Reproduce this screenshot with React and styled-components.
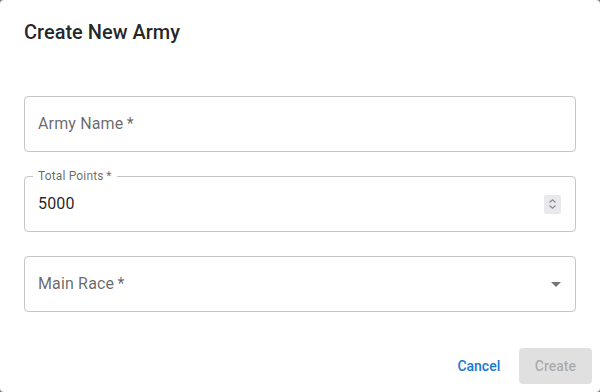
import React from "react";
import styled, { createGlobalStyle } from "styled-components";

const Global = createGlobalStyle`
  html, body { margin: 0; padding: 0; }
  body {
    background: #7a7a7a;
    font-family: Roboto, "Liberation Sans", sans-serif;
    -webkit-font-smoothing: antialiased;
  }
`;

const Dialog = styled.div`
  width: 600px;
  height: 392px;
  box-sizing: border-box;
  background: #fff;
  border-radius: 4px;
  display: flex;
  flex-direction: column;
  overflow: hidden;
`;

const Title = styled.h2`
  margin: 0;
  padding: 16px 24px;
  font-size: 20px;
  font-weight: 500;
  line-height: 32px;
  letter-spacing: 0;
  color: rgba(0, 0, 0, 0.87);
`;

const Content = styled.div`
  padding: 32px 24px 0;
  display: flex;
  flex-direction: column;
  gap: 24px;
`;

const Field = styled.div`
  position: relative;
  height: 56px;
  box-sizing: border-box;
  border: 1px solid rgba(0, 0, 0, 0.23);
  border-radius: 4px;
  display: flex;
  align-items: center;
  padding: 0 13px;
  font-size: 16px;
  color: ${(p) => (p.$placeholder ? "rgba(0,0,0,0.6)" : "rgba(0,0,0,0.87)")};
  letter-spacing: 0.15px;
`;

const FieldText = styled.span`
  flex: 1;
  line-height: 23px;
  margin-top: -1px;
`;

const FloatLabel = styled.span`
  position: absolute;
  left: 8px;
  top: -9px;
  padding: 0 5px;
  background: #fff;
  font-size: 12px;
  line-height: 16px;
  color: rgba(0, 0, 0, 0.6);
  letter-spacing: 0.15px;
`;

const Spinner = styled.span`
  width: 17px;
  height: 19px;
  background: #e9e9ed;
  border-radius: 2px;
  display: flex;
  align-items: center;
  justify-content: center;
  margin-right: 1px;
`;

const Arrow = styled.svg`
  width: 24px;
  height: 24px;
  margin-right: -6px;
  fill: rgba(0, 0, 0, 0.54);
`;

const Actions = styled.div`
  margin-top: auto;
  padding: 8px;
  display: flex;
  justify-content: flex-end;
  gap: 8px;
`;

const Button = styled.button`
  height: 36px;
  min-width: 64px;
  box-sizing: border-box;
  border: none;
  border-radius: 4px;
  font-family: Roboto, "Liberation Sans", sans-serif;
  font-size: 14px;
  font-weight: 500;
  letter-spacing: 0;
  padding: ${(p) => (p.$contained ? "6px 16px" : "6px 8px")};
  background: ${(p) => (p.$contained ? "rgba(0,0,0,0.12)" : "transparent")};
  color: ${(p) => (p.$contained ? "rgba(0,0,0,0.26)" : "#1976d2")};
  cursor: pointer;
`;

export default function App() {
  return (
    <>
      <Global />
      <Dialog>
        <Title>Create New Army</Title>
        <Content>
          <Field $placeholder>
            <FieldText>Army Name{"\u2009"}*</FieldText>
          </Field>
          <Field>
            <FloatLabel>Total Points{"\u2009"}*</FloatLabel>
            <FieldText>5000</FieldText>
            <Spinner>
              <svg width="9" height="12" viewBox="0 0 9 12" fill="none" stroke="#8a8a94" strokeWidth="1.2">
                <path d="M1.5 4.5 L4.5 1.8 L7.5 4.5" />
                <path d="M1.5 7.5 L4.5 10.2 L7.5 7.5" />
              </svg>
            </Spinner>
          </Field>
          <Field $placeholder>
            <FieldText>Main Race{"\u2009"}*</FieldText>
            <Arrow viewBox="0 0 24 24">
              <path d="M7 10l5 5 5-5z" />
            </Arrow>
          </Field>
        </Content>
        <Actions>
          <Button>Cancel</Button>
          <Button $contained disabled>Create</Button>
        </Actions>
      </Dialog>
    </>
  );
}
